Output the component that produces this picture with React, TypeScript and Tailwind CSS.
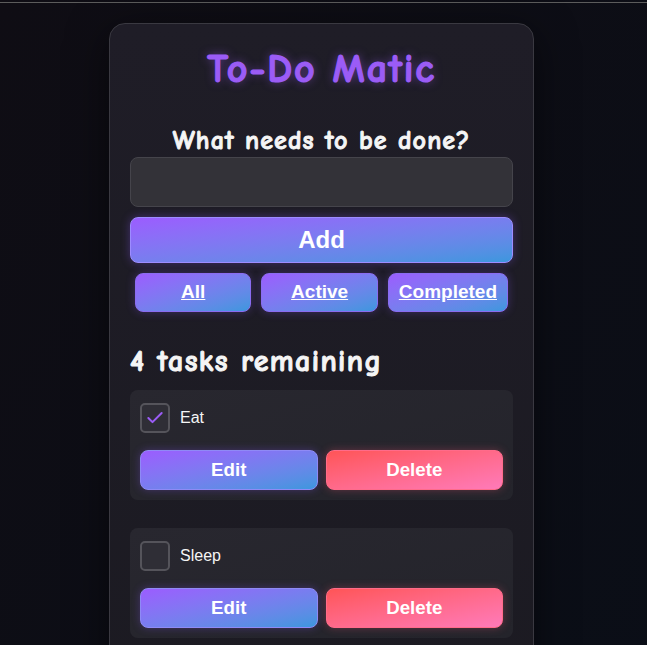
import React, { useState } from 'react';
import { Check } from 'lucide-react';

type Task = { id: number; name: string; done: boolean };

const comic = { fontFamily: '"Comic Sans MS", "Comic Neue", "DejaVu Sans", sans-serif' };

const App: React.FC = () => {
  const [tasks, setTasks] = useState<Task[]>([
    { id: 1, name: 'Eat', done: true },
    { id: 2, name: 'Sleep', done: false },
    { id: 3, name: 'Repeat', done: false },
  ]);
  const [text, setText] = useState('');

  const toggle = (id: number) =>
    setTasks(prev => prev.map(t => (t.id === id ? { ...t, done: !t.done } : t)));

  return (
    <div className="min-h-screen bg-linear-to-br from-[#0f0d14] to-[#0a0e17] font-['Liberation_Sans',Arial,sans-serif]">
      <div className="pt-[2px]">
        <div className="h-px bg-[#5c5c5c]" />
      </div>
      <div className="w-[425px] ml-[109px] mt-[20px] rounded-[16px] border border-[#3a3941] bg-linear-to-b from-[#1f1d27] to-[#1b1a21] px-5 pt-[20px] pb-6 shadow-[0_10px_40px_rgba(0,0,0,0.5)]">
        <h1
          style={comic}
          className="text-center text-[40px] leading-[50px] font-bold tracking-[1.8px] text-[#9b5cf6] [-webkit-text-stroke-width:1.2px] [text-shadow:0_0_10px_rgba(155,92,246,0.55)]"
        >
          To-Do Matic
        </h1>

        <label
          style={comic}
          className="block mt-[31px] text-center text-[26px] leading-[32px] font-bold tracking-[1.1px] text-[#f5f5f5] [-webkit-text-stroke-width:0.9px]"
        >
          What needs to be done?
        </label>
        <input
          value={text}
          onChange={e => setText(e.target.value)}
          className="block w-full h-[50px] rounded-[8px] border border-[#45444b] bg-[#333238] px-3 text-white outline-none"
        />
        <button className="mt-[10px] w-full h-[46px] rounded-[8px] border border-[#9d8cff] bg-linear-to-br from-[#9b5cff] to-[#3b97de] text-[24px] font-bold text-white shadow-[0_0_10px_rgba(140,90,255,0.35)]">
          Add
        </button>

        <div className="mt-[10px] flex">
          {['All', 'Active', 'Completed'].map(f => (
            <button
              key={f}
              className="flex-1 mx-[5px] px-[10px] h-[39px] rounded-[8px] border border-[#8a6cf0] bg-linear-to-br from-[#9b5cff] to-[#3b97de] text-[19px] font-bold text-white underline shadow-[0_0_10px_rgba(140,90,255,0.3)]"
            >
              {f}
            </button>
          ))}
        </div>

        <h2
          style={comic}
          className="mt-[32px] text-[30px] leading-[36px] font-bold tracking-[1.4px] text-[#f5f5f5] [-webkit-text-stroke-width:1px]"
        >
          4 tasks remaining
        </h2>

        <ul className="mt-[10px] flex flex-col gap-[28px]">
          {tasks.map(t => (
            <li key={t.id} className="rounded-[8px] bg-linear-to-br from-[#28272f] to-[#24242b] px-[10px] pt-[13px] pb-[10px]">
              <div className="flex items-center gap-[10px]">
                <button
                  onClick={() => toggle(t.id)}
                  className="w-[30px] h-[30px] rounded-[5px] border-2 border-[#55545b] bg-[#2f2e36] flex items-center justify-center"
                >
                  {t.done && <Check size={20} strokeWidth={2.4} color="#9b5cf6" />}
                </button>
                <span className="text-[16px] text-[#f5f5f5]">{t.name}</span>
              </div>
              <div className="mt-[17px] flex gap-[8px]">
                <button className="flex-1 h-[40px] rounded-[8px] border border-[#8f8af5] bg-linear-to-br from-[#9b5cff] to-[#3b97de] text-[18.7px] font-bold text-white shadow-[0_0_8px_rgba(140,90,255,0.3)]">
                  Edit
                </button>
                <button className="flex-1 h-[40px] rounded-[8px] border border-[#ff6b8a] bg-linear-to-br from-[#ff5456] to-[#ff7ab9] text-[18.7px] font-bold text-white shadow-[0_0_8px_rgba(255,90,120,0.3)]">
                  Delete
                </button>
              </div>
            </li>
          ))}
        </ul>
      </div>
    </div>
  );
};

export default App;
